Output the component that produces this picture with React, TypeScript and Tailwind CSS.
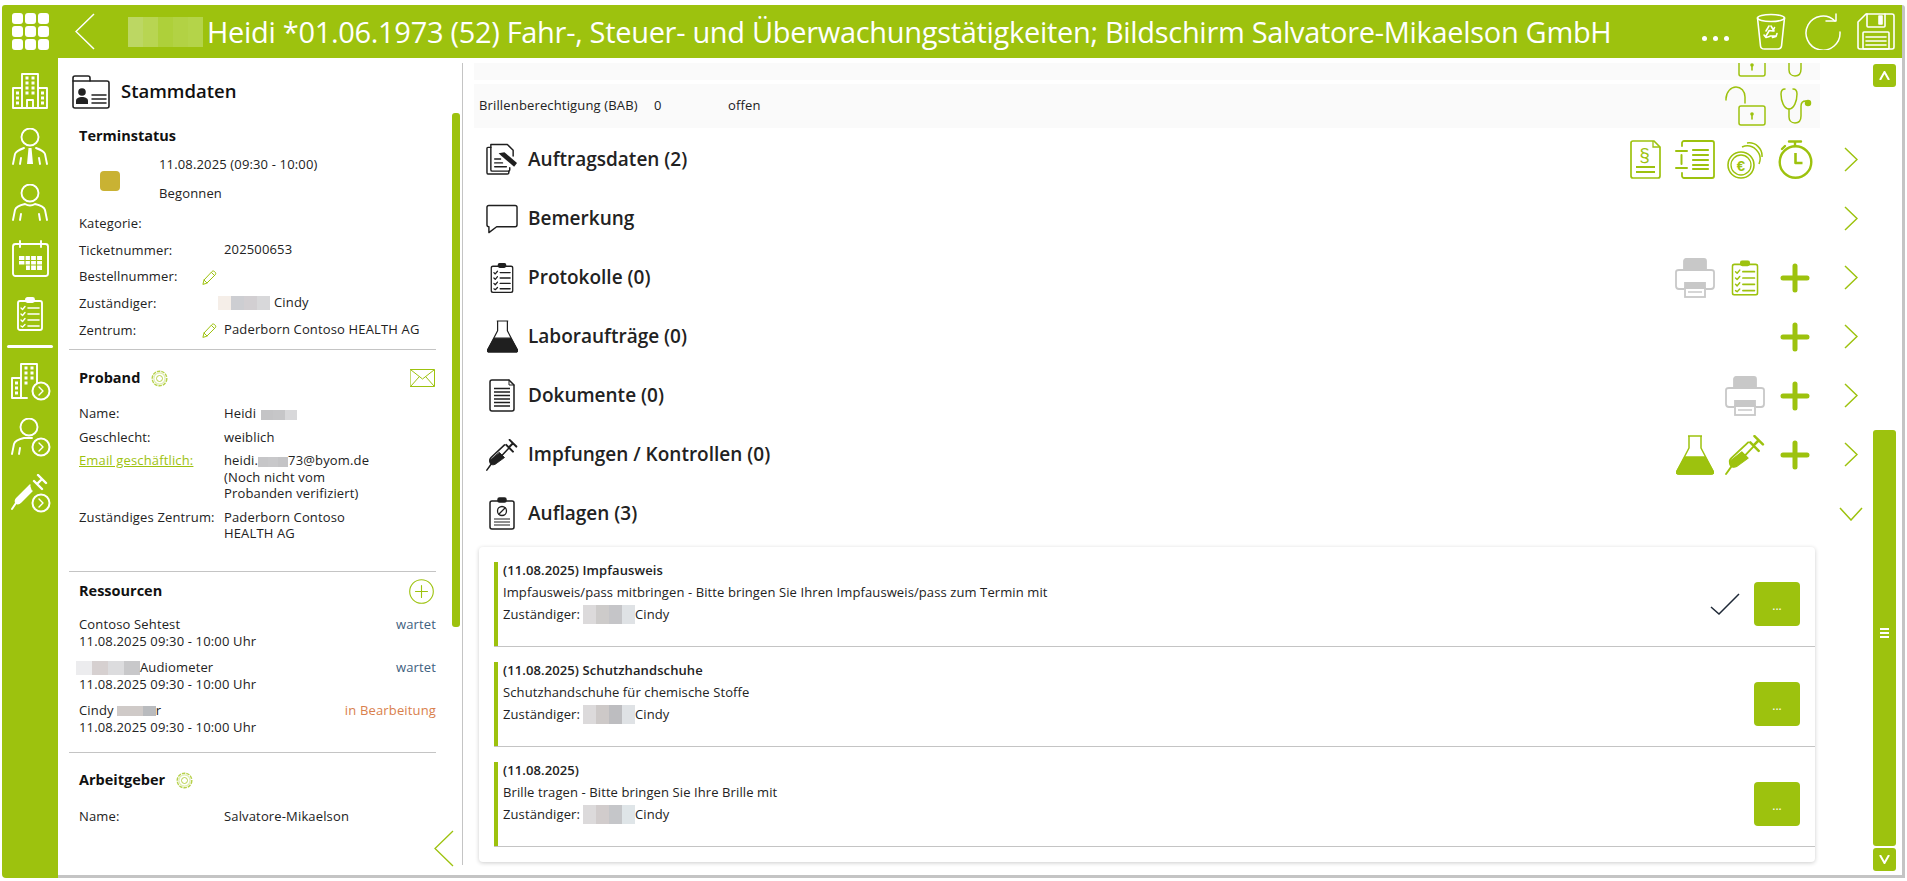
import React from 'react';

type IconProps = { className?: string };

const Svg: React.FC<{ w: number; h: number; className?: string; sw?: number; children: React.ReactNode }> = ({ w, h, className, sw = 1.6, children }) => (
  <svg width={w} height={h} viewBox={`0 0 ${w} ${h}`} fill="none" stroke="currentColor" strokeWidth={sw} strokeLinecap="round" strokeLinejoin="round" className={className}>
    {children}
  </svg>
);

const GridIcon = () => (
  <div className="grid grid-cols-3 gap-[2px] w-[37px] h-[37px]">
    {Array.from({ length: 9 }).map((_, i) => (
      <div key={i} className="bg-white rounded-[3px]" />
    ))}
  </div>
);

const Chevron: React.FC<{ w: number; h: number; dir: 'left' | 'right' | 'down'; className?: string; sw?: number }> = ({ w, h, dir, className, sw = 1.5 }) => {
  const d = dir === 'left' ? `M${w - 1} 1 L1 ${h / 2} L${w - 1} ${h - 1}` : dir === 'right' ? `M1 1 L${w - 1} ${h / 2} L1 ${h - 1}` : `M1 1 L${w / 2} ${h - 1} L${w - 1} 1`;
  return (
    <svg width={w} height={h} viewBox={`0 0 ${w} ${h}`} fill="none" stroke="currentColor" strokeWidth={sw} className={className}>
      <path d={d} />
    </svg>
  );
};

const Badge: React.FC<{ x: number; y: number }> = ({ x, y }) => (
  <g>
    <circle cx={x} cy={y} r="8.500" fill="#9dc20e" stroke="white" strokeWidth="2" />
    <path d={`M${x - 2} ${y - 4} L${x + 2} ${y} L${x - 2} ${y + 4}`} stroke="white" strokeWidth="1.400" />
  </g>
);

const BuildingIcon = () => (
  <Svg w={37} h={37} sw={1.900}>
    <path d="M10 36V2h16v34M10 16H1v20h9M26 16h9v20h-9M1 36h34" />
    <path d="M13.500 6h3M19.500 6h3M13.500 11h3M19.500 11h3M13.500 16h3M19.500 16h3M13.500 21h3M19.500 21h3M4 21h3M4 26h3M4 31h3M29 21h3M29 26h3M29 31h3" strokeWidth="3" strokeLinecap="butt" />
    <path d="M15 36v-8h6v8" />
  </Svg>
);

const PersonTieIcon = () => (
  <Svg w={37} h={37} sw={1.900}>
    <circle cx="18" cy="9" r="8.500" />
    <path d="M1 36l2-10q1-3 9-6M35 36l-2-10q-1-3-9-6M8 36l1-6M28 36l-1-6" />
    <path d="M16.500 20h3l1.500 16h-6z" fill="currentColor" stroke="none" />
  </Svg>
);

const PersonIcon = () => (
  <Svg w={37} h={37} sw={1.900}>
    <circle cx="18" cy="9" r="8.500" />
    <path d="M1 36l2-10q1-4 10-6M35 36l-2-10q-1-4-10-6M8 36l1-6M28 36l-1-6M13 20q5 3 10 0" />
  </Svg>
);

const CalendarIcon = () => (
  <Svg w={37} h={37} sw={1.900}>
    <rect x="1" y="4" width="35" height="32" rx="2.500" />
    <path d="M8 1v6M29 1v6M13 4h11" />
    <path d="M7 16h23v14H14v-5H7z" fill="currentColor" stroke="none" />
    <path d="M7 20.500h23M7 25h23M13 16v14M18.500 16v14M24.500 16v14" stroke="#9dc20e" strokeWidth="1.200" />
  </Svg>
);

const ClipboardIcon: React.FC<IconProps & { sw?: number }> = ({ className, sw = 1.600 }) => (
  <Svg w={26} h={34} sw={sw} className={className}>
    <rect x="1" y="4" width="24" height="29" rx="2" />
    <rect x="9" y="1" width="8" height="4" rx="1.500" fill="currentColor" />
    <path d="M4 11l1.500 1.500L8 9.500M4 17l1.500 1.500L8 15.500M4 23l1.500 1.500L8 21.500M4 29l1.500 1L8 27.500" strokeWidth="1.400" />
    <path d="M11 11h11M11 17h11M11 23h11M11 29h11" strokeWidth="1.600" />
  </Svg>
);

const BuildingBadgeIcon = () => (
  <Svg w={40} h={40} sw={1.900}>
    <path d="M10 36V2h16v20M10 16H1v20h15" />
    <path d="M13.500 6h3M19.500 6h3M13.500 11h3M19.500 11h3M13.500 16h3M19.500 16h3M13.500 21h3M4 21h3M4 26h3M4 31h3" strokeWidth="3" strokeLinecap="butt" />
    <Badge x={30} y={29} />
  </Svg>
);

const PersonBadgeIcon = () => (
  <Svg w={40} h={40} sw={1.900}>
    <circle cx="18" cy="9" r="8.500" />
    <path d="M1 36l2-10q1-4 10-6h8M8 36l1-6" />
    <Badge x={30} y={29} />
  </Svg>
);

const SyringeIcon: React.FC<IconProps & { size?: number }> = ({ className, size = 38 }) => (
  <svg width={size} height={size} viewBox="0 0 38 38" fill="none" stroke="currentColor" strokeLinecap="round" strokeLinejoin="round" className={className}>
    <path d="M28 1l8 8M32 5l-5 5M24 7l8 8" strokeWidth="2.400" />
    <path d="M27 11L11 28c-2 2-5 1-6-1s-1-3 1-5L22 7" strokeWidth="1.800" />
    <path d="M16 16l6 6-11 8c-2 1-5 1-6-1s-1-4 1-5z" fill="currentColor" strokeWidth="1" />
    <path d="M6 30l-5 7" strokeWidth="1.800" />
  </svg>
);

const SyringeBadgeIcon = () => (
  <Svg w={40} h={40} sw={1.900}>
    <path d="M27 1l8 8M31 5l-5 5M23 7l8 8" strokeWidth="2.400" />
    <path d="M19 11L6 24c-2 2-2 4-1 5s3 1 5-1l11-11" fill="currentColor" strokeWidth="1.400" />
    <path d="M5 29l-4 6" strokeWidth="2" />
    <Badge x={30} y={29} />
  </Svg>
);

const RecycleBinIcon = () => (
  <Svg w={30} h={37} sw={1.600}>
    <ellipse cx="15" cy="5" rx="13.500" ry="3.500" />
    <path d="M1.500 5l3 28c.2 2 2 3 4 3h13c2 0 3.800-1 4-3l3-28" />
    <path d="M13 13l-3 5M15 13l3 5M18.500 14.500l-1.500 3.500-4-.5M10 23l3-5M8 22l2 2.500 3.500-1M20 23h-6M21 20.500l-1 3-3.500 1" strokeWidth="1.600" />
  </Svg>
);

const RefreshIcon = () => (
  <Svg w={38} h={37} sw={1.500}>
    <path d="M31 8A17 17 0 1 0 36 19" />
    <path d="M22 8h10V1" />
  </Svg>
);

const SaveIcon = () => (
  <Svg w={38} h={37} sw={1.600}>
    <path d="M1 9l8-8h26c1 0 2 1 2 2v31c0 1-1 2-2 2H3c-1 0-2-1-2-2z" />
    <path d="M10 1v12c0 1 1 1 1 1h16c1 0 1-1 1-1V1" />
    <rect x="22" y="3" width="3" height="8" fill="currentColor" />
    <rect x="6" y="19" width="26" height="17" rx="1" />
    <path d="M9 24h20M9 28h20M9 32h20" />
  </Svg>
);

const CardIcon = () => (
  <Svg w={38} h={34} sw={1.400}>
    <path d="M1 10V3c0-1 1-2 2-2h13c1 0 2 1 2 2v3h17c1 0 2 1 2 2v23c0 1-1 2-2 2H3c-1 0-2-1-2-2z" strokeWidth="1.600" />
    <path d="M1 6h17" />
    <circle cx="10" cy="17" r="3.800" fill="currentColor" stroke="none" />
    <path d="M4 29v-3c0-3 3-4 6-4s6 1 6 4v3z" fill="currentColor" stroke="none" />
    <path d="M20 20h14M20 24h14M20 28h14" strokeWidth="1.500" />
  </Svg>
);

const PencilIcon = () => (
  <Svg w={15} h={15} sw={1}>
    <path d="M1 14l1-4 8-8.500c1-1 2-.5 3 .5s1 2 0 3L5 13z" />
    <path d="M2 10l3 3M9.500 2.500l3 3" />
  </Svg>
);

const GearIcon = () => (
  <svg width="17" height="17" viewBox="0 0 17 17" fill="none" stroke="#9dc20e">
    <circle cx="8.500" cy="8.500" r="7.300" strokeWidth="1.400" strokeDasharray="3.500 1" opacity="0.75" />
    <circle cx="8.500" cy="8.500" r="5.600" strokeWidth="0.700" opacity="0.6" />
    <circle cx="8.500" cy="8.500" r="3" strokeWidth="0.900" opacity="0.8" />
  </svg>
);

const MailIcon = () => (
  <Svg w={25} h={18} sw={1}>
    <rect x="0.500" y="0.500" width="24" height="17" />
    <path d="M1 1l11.500 9L24 1M1 17l8-9M24 17l-8-9" />
  </Svg>
);

const PlusCircleIcon = () => (
  <Svg w={25} h={25} sw={1.100}>
    <circle cx="12.500" cy="12.500" r="11.800" />
    <path d="M12.500 6.500v12M6.500 12.500h12" />
  </Svg>
);

const LockIcon = () => (
  <Svg w={41} h={40} sw={1.500}>
    <path d="M1 14V13C1 6 6 1 11 1s9 4 9 10v6" />
    <rect x="14" y="20" width="26" height="19" rx="2" />
    <circle cx="27" cy="28" r="1.800" fill="currentColor" stroke="none" />
    <path d="M27 29v4" strokeWidth="1.600" />
  </Svg>
);

const StethoscopeIcon = () => (
  <Svg w={32} h={36} sw={1.500}>
    <path d="M5 1C2 1 1 3 1 6c0 7 3 15 8 15s8-8 8-15c0-3-1-5-4-5" />
    <path d="M9 21v8c0 3 2 6 6 6s6-3 6-7v-10c0-3 2-5 5-5" />
    <circle cx="28" cy="15" r="2.500" fill="currentColor" />
  </Svg>
);

const ParagraphDocIcon = () => (
  <svg width="31" height="39" viewBox="0 0 31 39" fill="none" stroke="currentColor" strokeWidth="1.700">
    <path d="M24 1H3c-1 0-2 1-2 2v33c0 1 1 2 2 2h25c1 0 2-1 2-2V7z" />
    <path d="M23 1v6h7" strokeWidth="1.300" />
    <text x="14.500" y="21" textAnchor="middle" fontSize="19" fill="currentColor" stroke="none" fontFamily="'Liberation Sans',sans-serif">§</text>
    <path d="M6 27h19M6 32h19" strokeWidth="2" />
  </svg>
);

const ListBookIcon = () => (
  <Svg w={40} h={39} sw={1.800}>
    <path d="M7 6V3c0-1 1-2 2-2h28c1 0 2 1 2 2v33c0 1-1 2-2 2H9c-1 0-2-1-2-2v-3" />
    <path d="M1 11h11M1 28h11M6.500 15v9" strokeWidth="2" />
    <path d="M18 10h15M18 15h15M18 20h15M18 25h15M18 29h15" strokeWidth="2.200" />
  </Svg>
);

const CoinsIcon = () => (
  <svg width="36" height="38" viewBox="0 0 36 38" fill="none" stroke="currentColor">
    <path d="M15 6a13 13 0 0 1 17 17M20 2a13 13 0 0 1 15 14" strokeWidth="1.500" />
    <circle cx="14" cy="24" r="13" strokeWidth="1.600" />
    <circle cx="14" cy="24" r="10" strokeWidth="1.300" />
    <text x="14" y="29.500" textAnchor="middle" fontSize="15" fontWeight="700" fill="currentColor" stroke="none" fontFamily="'Liberation Sans',sans-serif">€</text>
  </svg>
);

const TimerIcon = () => (
  <Svg w={35} h={39} sw={2.400}>
    <path d="M11 1.500h12M17 2v4M4 9l3-3" />
    <circle cx="17.500" cy="22" r="15.800" />
    <path d="M17.500 13v10h7" strokeWidth="2.600" strokeLinecap="butt" />
  </Svg>
);

const PrinterIcon = () => (
  <svg width="40" height="40" viewBox="0 0 40 40" fill="none" stroke="#c8c8c8" strokeWidth="1.800">
    <path d="M9 12V3c0-1 1-2 2-2h18c1 0 2 1 2 2v9H9z" fill="#c8c8c8" />
    <path d="M9 31H4c-2 0-3-1-3-3V14c0-1 1-2 3-2h32c2 0 3 1 3 2v14c0 2-1 3-3 3h-5" />
    <rect x="10" y="30" width="20" height="9" strokeWidth="1.800" />
    <path d="M10 25h20v5H10z" fill="#c8c8c8" />
    <path d="M13 34h14" strokeWidth="1.500" />
  </svg>
);

const Plus = () => (
  <svg width="30" height="30" viewBox="0 0 30 30" stroke="#9dc20e" strokeWidth="5" strokeLinecap="round">
    <path d="M15 3v24M3 15h24" />
  </svg>
);

const FlaskIcon: React.FC<IconProps & { w?: number; h?: number }> = ({ w = 38, h = 40, className }) => (
  <svg width={w} height={h} viewBox="0 0 38 40" fill="none" stroke="currentColor" strokeWidth="1.500" strokeLinejoin="round" className={className}>
    <path d="M12 1h14M13 1v12L1 36c-1 2 0 3 2 3h32c2 0 3-1 2-3L25 13V1" />
    <path d="M9 22h20l8 14c1 2 0 3-2 3H3c-2 0-3-1-2-3z" fill="currentColor" />
  </svg>
);

const DocsPencilIcon = () => (
  <Svg w={33} h={33} sw={1.500}>
    <path d="M5 4H2c-.6 0-1 .5-1 1v25c0 1 .5 1.500 1 1.500h20c1 0 1.500-.5 1.500-1v-2" />
    <path d="M5 1h17l6 6v6M5 1v26c0 1 1 1.500 1.500 1.500H23c1 0 1.500-.5 1.500-1.500v-2" />
    <path d="M9 16h6M9 20h8M9 24h12" strokeWidth="1.500" />
    <path d="M12 9l6-1 13 11-3 4-13-11z" fill="currentColor" stroke="none" transform="translate(1 1)" />
  </Svg>
);

const BubbleIcon = () => (
  <Svg w={33} h={30} sw={1.500}>
    <path d="M3 1h27c1 0 2 1 2 2v18c0 1-1 2-2 2H11l-8 6v-6H3c-1 0-2-1-2-2V3c0-1 1-2 2-2z" />
  </Svg>
);

const DocLinesIcon = () => (
  <Svg w={26} h={33} sw={1.500}>
    <path d="M20 1H3C2 1 1 2 1 3v27c0 1 1 2 2 2h20c1 0 2-1 2-2V6z" />
    <path d="M20 1v5h5" strokeWidth="1" />
    <path d="M5 9.500h16M5 13h16M5 16.500h16M5 20h16M5 23.500h16M5 27h16" strokeWidth="1.300" strokeLinecap="butt" />
  </Svg>
);

const ClipProhibitIcon = () => (
  <Svg w={26} h={33} sw={1.500}>
    <rect x="1" y="4" width="24" height="28" rx="2" />
    <rect x="9" y="1" width="8" height="4" rx="1.500" fill="currentColor" />
    <circle cx="13" cy="14" r="4.500" strokeWidth="1.300" />
    <path d="M10 17l6-6" strokeWidth="1.300" />
    <path d="M5 22h16M5 25h16M5 28h16" strokeWidth="1.200" strokeLinecap="butt" />
  </Svg>
);

// pixelated patch that hides a name in the screenshot
const Blur: React.FC<{ cells: string[]; h?: number; cell?: number; className?: string }> = ({ cells, h = 14, cell = 15, className = '' }) => (
  <span className={`inline-flex align-middle ${className}`}>
    {cells.map((c, i) => (
      <span key={i} className="inline-block" style={{ backgroundColor: c, width: cell, height: h }} />
    ))}
  </span>
);

const Row: React.FC<{ label: React.ReactNode; h: string; pencil?: boolean; children?: React.ReactNode }> = ({ label, h, pencil, children }) => (
  <div className={`flex items-center ${h}`}>
    <div className="w-[123px] shrink-0">{label}</div>
    <div className="w-[22px] shrink-0 text-[#9dc20e] flex items-center">{pencil && <PencilIcon />}</div>
    <div className="-mt-[2px]">{children}</div>
  </div>
);

const Field: React.FC<{ label: React.ReactNode; children: React.ReactNode }> = ({ label, children }) => (
  <div className="flex">
    <div className="w-[145px] shrink-0">{label}</div>
    <div>{children}</div>
  </div>
);

const Resource: React.FC<{ name: React.ReactNode; status: string; orange?: boolean }> = ({ name, status, orange }) => (
  <div className="flex justify-between leading-[17px]">
    <div>
      <div className="h-[17px] flex items-center">{name}</div>
      <div>11.08.2025 09:30 - 10:00 Uhr</div>
    </div>
    <div className={orange ? 'text-[#d9804c]' : 'text-[#3f6180]'}>{status}</div>
  </div>
);

const IconCell: React.FC<{ children?: React.ReactNode }> = ({ children }) => (
  <div className="w-[50px] flex justify-center items-center text-[#9dc20e]">{children}</div>
);

const Section: React.FC<{ icon: React.ReactNode; title: string; actions?: React.ReactNode; open?: boolean }> = ({ icon, title, actions, open }) => (
  <div className="h-[59px] flex items-center w-[1397px]">
    <div className="w-[32px] ml-[12px] flex justify-center text-[#1f1f1f] shrink-0">{icon}</div>
    <div className="ml-[10px] -mt-[1px] text-[19px] font-semibold text-[#222]">{title}</div>
    <div className="ml-auto flex items-center">{actions}</div>
    <div className="w-[40px] ml-[11px] flex justify-center text-[#9dc20e]">
      {open ? <Chevron w={24} h={14} dir="down" /> : <Chevron w={14} h={25} dir="right" />}
    </div>
  </div>
);

const Task: React.FC<{ date: string; title?: string; text: string; cells: string[]; done?: boolean }> = ({ date, title, text, cells, done }) => (
  <div className="h-[85px] mb-[15px] ml-[15px] flex border-b border-[#c4c4c4] last:mb-0">
    <div className="w-[4px] bg-[#9dc20e] shrink-0" />
    <div className="pl-[5px] -mt-[3px] leading-[22px] text-[13px] tracking-[0.1px] text-[#222]">
      <div className="font-semibold">
        {date} {title}
      </div>
      <div>{text}</div>
      <div className="flex items-center">
        Zuständiger:
        <Blur cells={cells} h={19} cell={13} className="ml-[3px]" />
        Cindy
      </div>
    </div>
    <div className="ml-auto flex items-start pt-[20px] pr-[15px]">
      {done && (
        <svg width="30" height="22" viewBox="0 0 30 22" fill="none" stroke="#1f2937" strokeWidth="1.500" className="mt-[11px] mr-[14px]">
          <path d="M1 14l8 7L29 1" />
        </svg>
      )}
      <div className="w-[46px] h-[44px] rounded-[4px] bg-[#9dc20e] text-white text-[12px] flex items-center justify-center pt-[4px]">...</div>
    </div>
  </div>
);

const SideBtn: React.FC<{ children: React.ReactNode; className?: string }> = ({ children, className = '' }) => (
  <div className={`h-[56px] flex items-center justify-center text-white ${className}`}>{children}</div>
);

export default function App() {
  return (
    <div className="w-[1907px] h-[881px] bg-white overflow-hidden pt-[5px] pl-[2px] font-['Open_Sans','Noto_Sans',sans-serif]">
      <div className="w-[1903px] h-[873px] flex flex-col border-r-[3px] border-[#c4c4c4] rounded-t-[3px] overflow-hidden">
        {/* Title bar */}
        <header className="h-[53px] shrink-0 bg-[#9dc20e] text-white flex items-center">
          <div className="ml-[10px]"><GridIcon /></div>
          <Chevron w={20} h={37} dir="left" className="ml-[26px]" />
          <Blur cells={['#bcd763', '#b8d552', '#aed03a', '#b2d244', '#b4d449']} h={30} className="ml-[33px]" />
          <div className="ml-[4px] text-[29px] tracking-[-0.310px] whitespace-nowrap leading-none">Heidi *01.06.1973 (52) Fahr-, Steuer- und Überwachungstätigkeiten; Bildschirm Salvatore-Mikaelson GmbH</div>
          <div className="ml-auto flex items-center pr-[7px]">
            <div className="flex gap-[6px] mr-[27px] mt-[14px]">
              <span className="w-[5px] h-[5px] rounded-full bg-white" />
              <span className="w-[5px] h-[5px] rounded-full bg-white" />
              <span className="w-[5px] h-[5px] rounded-full bg-white" />
            </div>
            <RecycleBinIcon />
            <div className="ml-[18px]"><RefreshIcon /></div>
            <div className="ml-[15px]"><SaveIcon /></div>
          </div>
        </header>

        <div className="flex flex-1 min-h-0">
          {/* Icon rail */}
          <nav className="w-[56px] shrink-0 bg-[#9dc20e] rounded-bl-[4px] pt-[4px]">
            <SideBtn><BuildingIcon /></SideBtn>
            <SideBtn><PersonTieIcon /></SideBtn>
            <SideBtn><PersonIcon /></SideBtn>
            <SideBtn><CalendarIcon /></SideBtn>
            <SideBtn><ClipboardIcon sw={1.900} /></SideBtn>
            <div className="h-[3px] bg-white rounded-full mx-[5px] mt-[3px] mb-[6px]" />
            <SideBtn className="pl-[2px]"><BuildingBadgeIcon /></SideBtn>
            <SideBtn className="pl-[2px]"><PersonBadgeIcon /></SideBtn>
            <SideBtn className="pl-[2px]"><SyringeBadgeIcon /></SideBtn>
          </nav>

          <div className="flex flex-1 min-w-0 border-b-[3px] border-[#c4c4c4]">
            {/* Left panel */}
            <aside className="relative w-[406px] shrink-0 overflow-hidden text-[13px] tracking-[0.15px] text-[#222]">
              <div className="absolute right-[1px] top-[5px] bottom-[10px] w-px bg-[#c4c4c4]" />
              <div className="absolute right-[4px] top-[55px] h-[514px] w-[8px] rounded-[3px] bg-[#9dc20e]" />
              <div className="absolute right-[10px] bottom-[8px] text-[#9dc20e]">
                <Chevron w={20} h={37} dir="left" sw={1.300} />
              </div>

              <div className="flex items-center h-[33px] mt-[17px] ml-[14px]">
                <CardIcon />
                <span className="ml-[11px] -mt-[2px] text-[18.500px] tracking-normal font-semibold text-[#111]">Stammdaten</span>
              </div>

              <div className="ml-[11px] w-[367px]">
                <div className="pl-[10px] border-b border-[#c4c4c4] h-[242px] pt-[18px]">
                  <div className="h-[20px] flex items-center text-[14.500px] tracking-normal font-bold text-[#111]">Terminstatus</div>
                  <div className="flex mt-[4px] h-[60px]">
                    <div className="w-[80px] shrink-0 pt-[21px] pl-[21px]">
                      <div className="w-[20px] h-[20px] rounded-[4px] bg-[#c9b233]" />
                    </div>
                    <div className="leading-[29px]">
                      <div>11.08.2025 (09:30 - 10:00)</div>
                      <div>Begonnen</div>
                    </div>
                  </div>
                  <Row h="h-[27px]" label="Kategorie:" />
                  <Row h="h-[27px]" label="Ticketnummer:">202500653</Row>
                  <Row h="h-[26px]" label="Bestellnummer:" pencil />
                  <Row h="h-[27px]" label="Zuständiger:">
                    <span className="flex items-center -ml-[6px]">
                      <Blur cells={['#f5eee8', '#cdced2', '#d2cfd2', '#d8d8da']} h={14} cell={13} className="mr-[4px]" />
                      Cindy
                    </span>
                  </Row>
                  <Row h="h-[27px]" label="Zentrum:" pencil>Paderborn Contoso HEALTH AG</Row>
                </div>

                <div className="pl-[10px] pr-[1px] border-b border-[#c4c4c4] h-[222px] pt-[18px]">
                  <div className="h-[20px] flex items-center text-[14.500px] tracking-normal font-bold text-[#111]">
                    Proband
                    <span className="ml-[11px]"><GearIcon /></span>
                    <span className="ml-auto text-[#9dc20e]"><MailIcon /></span>
                  </div>
                  <div className="flex flex-col gap-[7px] mt-[17px] leading-[16.500px]">
                    <Field label="Name:">
                      Heidi <Blur cells={['#c4c4c6', '#c6c6c8', '#d8d8da']} h={10} cell={12} className="ml-[1px]" />
                    </Field>
                    <Field label="Geschlecht:">weiblich</Field>
                    <Field label={<span className="text-[#9dc20e] underline">Email geschäftlich:</span>}>
                      heidi.<Blur cells={['#c6c6c8', '#c8c8ca', '#c4c4c6']} h={10} cell={10} />73@byom.de
                      <br />
                      (Noch nicht vom
                      <br />
                      Probanden verifiziert)
                    </Field>
                    <Field label="Zuständiges Zentrum:">
                      Paderborn Contoso
                      <br />
                      HEALTH AG
                    </Field>
                  </div>
                </div>

                <div className="pl-[10px] border-b border-[#c4c4c4] h-[181px] pt-[7px]">
                  <div className="h-[24px] flex items-center justify-between text-[14.500px] tracking-normal font-bold text-[#111]">
                    Ressourcen
                    <span className="text-[#9dc20e] mr-[2px]"><PlusCircleIcon /></span>
                  </div>
                  <div className="flex flex-col gap-[9px] mt-[13px]">
                    <Resource name="Contoso Sehtest" status="wartet" />
                    <Resource
                      name={
                        <span className="flex items-center -ml-[3px]">
                          <Blur cells={['#ececee', '#d6d0d0', '#dcdcde', '#c8c8ca']} h={14} cell={16} />
                          Audiometer
                        </span>
                      }
                      status="wartet"
                    />
                    <Resource
                      name={
                        <span className="flex items-center">
                          Cindy
                          <Blur cells={['#cfcac8', '#cfcac8', '#b9bbbe']} h={10} cell={13} className="ml-[3px]" />
                          r
                        </span>
                      }
                      status="in Bearbeitung"
                      orange
                    />
                  </div>
                </div>

                <div className="pl-[10px] pt-[17px]">
                  <div className="h-[20px] flex items-center text-[14.500px] tracking-normal font-bold text-[#111]">
                    Arbeitgeber
                    <span className="ml-[11px]"><GearIcon /></span>
                  </div>
                  <div className="mt-[18px] leading-[17px]">
                    <Field label="Name:">Salvatore-Mikaelson</Field>
                  </div>
                </div>
              </div>
            </aside>

            {/* Main column */}
            <main className="relative flex-1 min-w-0 overflow-hidden pl-[10px] pt-[5px]">
              <div className="w-[1346px] h-[17px] bg-[#fafafa] overflow-hidden flex justify-end items-end text-[#9dc20e] pr-[8px] gap-[14px]">
                <div className="mb-[3px]"><LockIcon /></div>
                <div className="mb-[3px]"><StethoscopeIcon /></div>
              </div>
              <div className="w-[1346px] h-[44px] mt-[4px] bg-[#fafafa] flex items-center text-[13px] tracking-[0.15px] text-[#222]">
                <span className="ml-[5px] w-[175px]">Brillenberechtigung (BAB)</span>
                <span className="w-[74px]">0</span>
                <span>offen</span>
                <div className="ml-auto flex items-center gap-[14px] pr-[8px] text-[#9dc20e]">
                  <LockIcon />
                  <StethoscopeIcon />
                </div>
              </div>

              <div className="mt-[2px]">
                <Section
                  icon={<DocsPencilIcon />}
                  title="Auftragsdaten (2)"
                  actions={
                    <>
                      <IconCell><ParagraphDocIcon /></IconCell>
                      <IconCell><ListBookIcon /></IconCell>
                      <IconCell><CoinsIcon /></IconCell>
                      <IconCell><TimerIcon /></IconCell>
                    </>
                  }
                />
                <Section icon={<BubbleIcon />} title="Bemerkung" />
                <Section
                  icon={<ClipboardIcon className="scale-[0.9]" />}
                  title="Protokolle (0)"
                  actions={
                    <>
                      <IconCell><PrinterIcon /></IconCell>
                      <IconCell><ClipboardIcon className="scale-[1.050]" /></IconCell>
                      <IconCell><Plus /></IconCell>
                    </>
                  }
                />
                <Section icon={<FlaskIcon w={31} h={33} />} title="Laboraufträge (0)" actions={<IconCell><Plus /></IconCell>} />
                <Section
                  icon={<DocLinesIcon />}
                  title="Dokumente (0)"
                  actions={
                    <>
                      <IconCell><PrinterIcon /></IconCell>
                      <IconCell><Plus /></IconCell>
                    </>
                  }
                />
                <Section
                  icon={<SyringeIcon size={32} />}
                  title="Impfungen / Kontrollen (0)"
                  actions={
                    <>
                      <IconCell><FlaskIcon /></IconCell>
                      <IconCell><SyringeIcon size={40} /></IconCell>
                      <IconCell><Plus /></IconCell>
                    </>
                  }
                />
                <Section icon={<ClipProhibitIcon />} title="Auflagen (3)" open />
              </div>

              <div className="ml-[5px] mt-[4px] w-[1336px] h-[315px] bg-white rounded-[4px] shadow-[0_1px_4px_rgba(0,0,0,0.2)] pt-[15px]">
                <Task date="(11.08.2025)" title="Impfausweis" text="Impfausweis/pass mitbringen - Bitte bringen Sie Ihren Impfausweis/pass zum Termin mit" cells={['#dcdadb', '#cdcbca', '#c5c5c8', '#dfe2e5']} done />
                <Task date="(11.08.2025)" title="Schutzhandschuhe" text="Schutzhandschuhe für chemische Stoffe" cells={['#dcdadb', '#cdc9c8', '#bdbdc0', '#dfe2e5']} />
                <Task date="(11.08.2025)" text="Brille tragen - Bitte bringen Sie Ihre Brille mit" cells={['#dcdadb', '#d1cccc', '#c5c6c9', '#dfe5e8']} />
              </div>

              {/* Scrollbar over the column */}
              <div className="absolute left-[1409px] top-[6px] w-[23px] h-[23px] rounded-[3px] bg-[#9dc20e] flex items-center justify-center">
                <svg width="11" height="9" viewBox="0 0 11 9" fill="none" stroke="white" strokeWidth="2"><path d="M1 9L5.500 1 10 9" /></svg>
              </div>
              <div className="absolute left-[1409px] top-[372px] w-[23px] h-[416px] rounded-[3px] bg-[#9dc20e] flex items-center justify-center">
                <div className="flex flex-col gap-[2px] mt-[-10px]">
                  <span className="w-[9px] h-[2px] bg-white" />
                  <span className="w-[9px] h-[2px] bg-white" />
                  <span className="w-[9px] h-[2px] bg-white" />
                </div>
              </div>
              <div className="absolute left-[1409px] top-[790px] w-[23px] h-[23px] rounded-[3px] bg-[#9dc20e] flex items-center justify-center">
                <svg width="11" height="9" viewBox="0 0 11 9" fill="none" stroke="white" strokeWidth="2"><path d="M1 0L5.500 8 10 0" /></svg>
              </div>
            </main>
          </div>
        </div>
      </div>
    </div>
  );
}
